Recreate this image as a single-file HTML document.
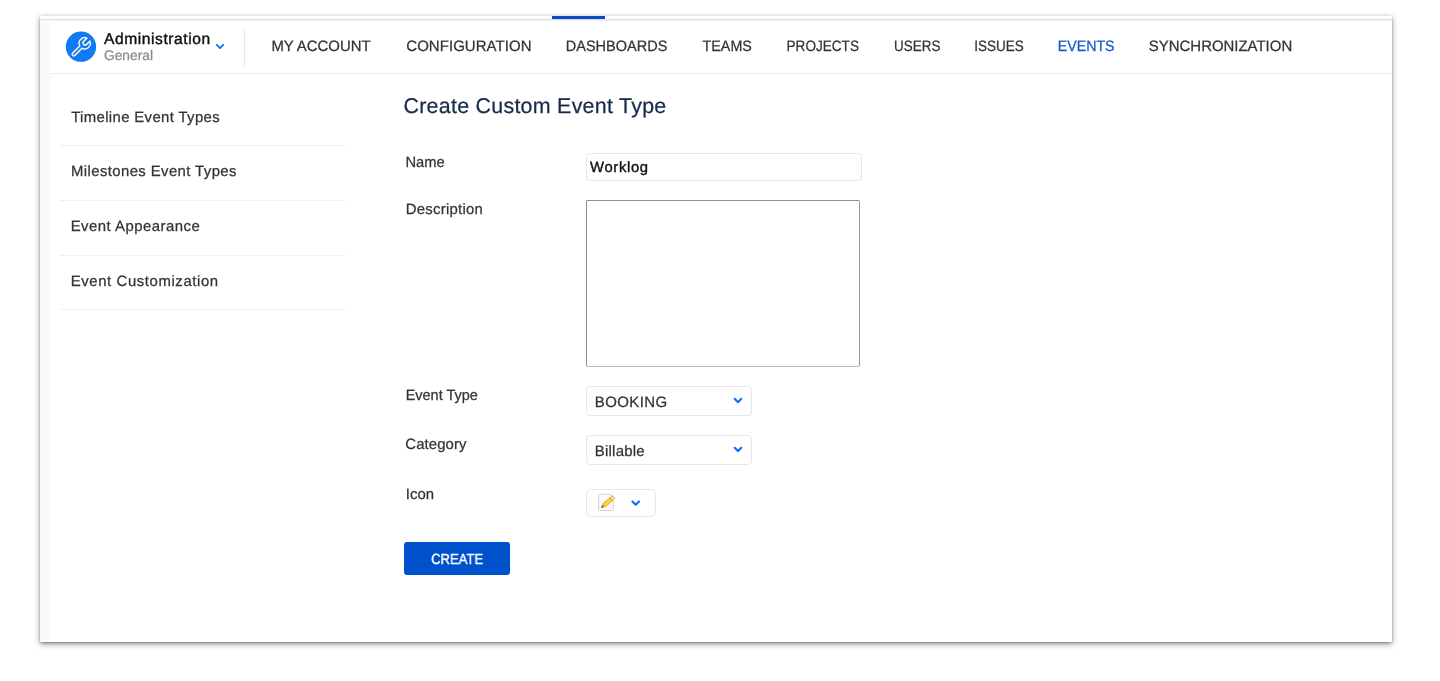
<!DOCTYPE html>
<html lang="en">
<head>
<meta charset="utf-8">
<title>Create Custom Event Type</title>
<style>
*{box-sizing:border-box;margin:0;padding:0}
html,body{width:1440px;height:681px;background:#fff;overflow:hidden}
body{font-family:"Liberation Sans",sans-serif;color:#222;position:relative;text-rendering:geometricPrecision}
.card{position:absolute;left:40px;top:16px;width:1352px;height:626px;background:#fff;
  box-shadow:0 2px 6px rgba(0,0,0,.42),0 1px 2px rgba(0,0,0,.25);will-change:transform}
.topline{position:absolute;left:0;top:3px;width:1352px;height:1px;background:#dcdfe7;box-shadow:0 1px 0 #f1f2f6}
.strip{position:absolute;left:0;top:4px;width:10px;height:622px;background:#fafafa}
.tabbar{position:absolute;left:512px;top:0;width:53px;height:3px;background:#084cc8}
.hdrline{position:absolute;left:10px;top:57px;width:1342px;height:1px;background:#ebecf0}
.t{position:absolute;display:block;font-weight:normal;text-decoration:none;white-space:nowrap;line-height:1;transform-origin:0 0;-webkit-text-stroke:0.25px currentColor}
.m{-webkit-text-stroke:0.4px currentColor}
.vdiv{position:absolute;left:204px;top:12px;width:1px;height:38px;background:#e8e8ec}
.side-div{position:absolute;left:20px;width:285px;height:1px;background:#f0f0f1}
.inp{position:absolute;border:1px solid #e7e7e9;border-radius:4px;background:#fff}
.ta{position:absolute;border:1px solid #8c8c8c;border-right-color:#999;border-bottom-color:#bdbdbd;border-radius:2px;background:#fff}
.ico{position:absolute;left:0;top:0;pointer-events:none}
.btn{position:absolute;display:block;border:0;padding:0;font:inherit;text-rendering:inherit;text-align:left;cursor:pointer;left:364px;top:526px;width:106px;height:33px;background:#0052cc;border-radius:3px}
</style>
</head>
<body>
<div class="card">
  <div class="topline"></div>
  <div class="strip"></div>
  <div class="tabbar"></div>
  <div class="hdrline"></div>

  <header>
  <!-- brand -->
  <span class="t m" id="adm" style="left:63.99px;top:16px;font-size:15.6px;letter-spacing:0.568px;color:#111">Administration</span>
  <span class="t" id="gen" style="left:64px;top:33px;font-size:13.8px;transform:translateX(0.01px) scaleX(0.9972);color:#8c8c8c">General</span>
  <div class="vdiv"></div>
  <nav>
  <a class="t nav" id="n1" href="#" style="left:231px;top:23px;font-size:15px;transform:translateX(0.39px) scaleX(0.9945);color:#333">MY ACCOUNT</a>
  <a class="t nav" id="n2" href="#" style="left:366.25px;top:23px;font-size:15px;letter-spacing:0.044px;color:#333">CONFIGURATION</a>
  <a class="t nav" id="n3" href="#" style="left:525px;top:23px;font-size:15px;transform:translateX(0.74px) scaleX(0.9674);color:#333">DASHBOARDS</a>
  <a class="t nav" id="n4" href="#" style="left:662px;top:23px;font-size:15px;transform:translateX(0.61px) scaleX(0.9519);color:#333">TEAMS</a>
  <a class="t nav" id="n5" href="#" style="left:746px;top:23px;font-size:15px;transform:translateX(0.57px) scaleX(0.9046);color:#333">PROJECTS</a>
  <a class="t nav" id="n6" href="#" style="left:854px;top:23px;font-size:15px;transform:translateX(0.12px) scaleX(0.8966);color:#333">USERS</a>
  <a class="t nav" id="n7" href="#" style="left:934px;top:23px;font-size:15px;transform:translateX(0.35px) scaleX(0.8998);color:#333">ISSUES</a>
  <a class="t nav" id="n8" href="#" style="left:1017px;top:23px;font-size:15px;transform:translateX(0.73px) scaleX(0.9473);color:#1257d0">EVENTS</a>
  <a class="t nav" id="n9" href="#" style="left:1108px;top:23px;font-size:15px;transform:translateX(0.85px) scaleX(0.9960);color:#333">SYNCHRONIZATION</a>
  </nav>
  </header>

  <aside>
  <a class="t" id="s1" href="#" style="left:31.21px;top:95px;font-size:14.9px;letter-spacing:0.363px;color:#333">Timeline Event Types</a>
  <div class="side-div" style="top:129px"></div>
  <a class="t" id="s2" href="#" style="left:30.98px;top:149px;font-size:14.9px;letter-spacing:0.405px;color:#333">Milestones Event Types</a>
  <div class="side-div" style="top:184px"></div>
  <a class="t" id="s3" href="#" style="left:30.71px;top:204px;font-size:14.9px;letter-spacing:0.484px;color:#333">Event Appearance</a>
  <div class="side-div" style="top:239px"></div>
  <a class="t" id="s4" href="#" style="left:30.71px;top:259px;font-size:14.9px;letter-spacing:0.602px;color:#333">Event Customization</a>
  <div class="side-div" style="top:293px"></div>
  </aside>

  <main>
  <h1 class="t" id="h1" style="left:363.44px;top:80px;font-size:21.4px;letter-spacing:0.277px;color:#172b4d">Create Custom Event Type</h1>

  <label class="t" id="l1" style="left:365px;top:140px;font-size:14.9px;transform:translateX(0.49px) scaleX(0.9885);color:#333">Name</label>
  <div class="inp" style="left:546px;top:137px;width:276px;height:27.5px"></div>
  <span class="t m" id="v1" style="left:550.05px;top:145px;font-size:14.8px;letter-spacing:0.659px;color:#111">Worklog</span>

  <label class="t" id="l2" style="left:365.68px;top:187px;font-size:14.9px;letter-spacing:0.266px;color:#333">Description</label>
  <div class="ta" style="left:546.2px;top:184px;width:274.1px;height:166.7px"></div>

  <label class="t" id="l3" style="left:365px;top:373px;font-size:14.9px;transform:translateX(0.64px) scaleX(0.9736);color:#333">Event Type</label>
  <div class="inp" style="left:546px;top:370px;width:166px;height:30px"></div>
  <span class="t" id="v3" style="left:554.84px;top:379px;font-size:15px;letter-spacing:0.375px;color:#333">BOOKING</span>

  <label class="t" id="l4" style="left:365.30px;top:422px;font-size:14.9px;letter-spacing:0.100px;color:#333">Category</label>
  <div class="inp" style="left:546px;top:419px;width:166px;height:30px"></div>
  <span class="t" id="v4" style="left:554.84px;top:428px;font-size:15px;letter-spacing:0.206px;color:#333">Billable</span>

  <label class="t" id="l5" style="left:365.67px;top:472px;font-size:14.9px;letter-spacing:0.084px;color:#333">Icon</label>
  <div class="inp" style="left:546px;top:473.4px;width:70px;height:27.3px;border-radius:5px"></div>


  <!-- vector icons (card coordinates) -->
  <svg class="ico" width="1352" height="626" viewBox="40 16 1352 626">
    <circle cx="81" cy="46.7" r="15.1" fill="#0f7af5"/>
    <g transform="translate(84.7,43.3) rotate(45)" fill="none" stroke="#f6f0e6" stroke-width="1.5" stroke-linejoin="round">
      <path d="M-2.1,-5.2 L-2.1,-0.6 A2.1,2.1 0 0 0 2.1,-0.6 L2.1,-5.2 A5.6,5.6 0 0 1 1.6,5.37 L1.6,15.5 A1.6,1.6 0 0 1 -1.6,15.5 L-1.6,5.37 A5.6,5.6 0 0 1 -2.1,-5.2 Z"/>
    </g>
    <g fill="none" stroke="#0d6efd" stroke-linecap="round" stroke-linejoin="round">
      <path stroke-width="1.8" d="M216.9,44.9 L220.05,48.1 L223.2,44.9"/>
      <path stroke-width="2.1" d="M734.7,398.85 L738,402.2 L741.3,398.85"/>
      <path stroke-width="2.1" d="M734.7,447.75 L738,451.1 L741.3,447.75"/>
      <path stroke-width="2.1" d="M632.4,501.45 L635.7,504.8 L639,501.45"/>
    </g>
    <!-- page + pencil -->
    <path d="M599.7,494.25 H610.3 L613.3,497.25 V509.55 Q613.3,510.55 612.3,510.55 H599.7 Q598.7,510.55 598.7,509.55 V495.25 Q598.7,494.25 599.7,494.25 Z" fill="#fbfbfb" stroke="#cfcfcf" stroke-width="1"/>
    <g transform="translate(601.2,507.7) rotate(-40.5)">
      <path d="M0,0 L3.4,-1.9 L3.4,1.9 Z" fill="#c98f3e"/>
      <path d="M0,0 L1.9,-1.06 L1.9,1.06 Z" fill="#4a3a14"/>
      <rect x="3.4" y="-1.9" width="9.6" height="3.8" fill="#f8d840" stroke="#dfa030" stroke-width="0.9"/>
      <rect x="13" y="-1.9" width="3.6" height="3.8" rx="1.3" fill="#f6dfb6" stroke="#dfa030" stroke-width="0.9"/>
    </g>
  </svg>

  <button class="btn" type="button"><span class="t m" id="b1" style="left:27px;top:11px;font-size:14.7px;transform:translateX(0.18px) scaleX(0.8876);color:#fff">CREATE</span></button>
  </main>
</div>
</body>
</html>
